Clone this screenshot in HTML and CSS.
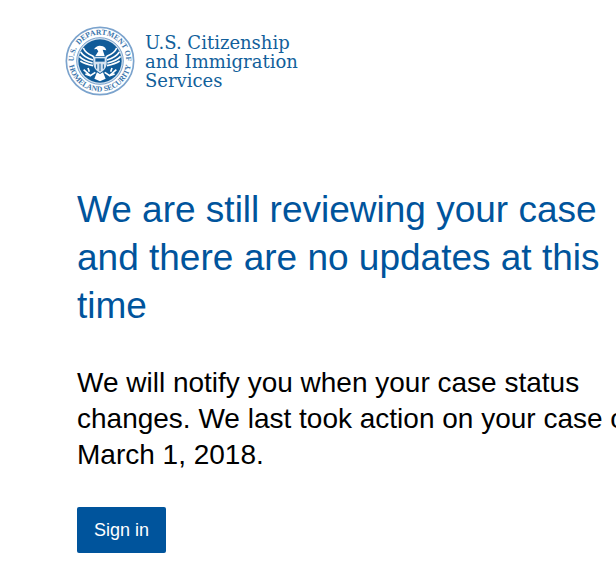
FILE: index.html
```
<!DOCTYPE html>
<html lang="en">
<head>
    <meta charset="UTF-8">
    <meta name="viewport" content="width=device-width, initial-scale=1.0">
    <title>Case Status - U.S. Citizenship and Immigration Services</title>
    <link rel="stylesheet" href="styles.css">
</head>
<body>
    <header class="header">
        <svg class="seal" viewBox="15 18 210 210" role="img" aria-label="U.S. Department of Homeland Security">
            <defs>
                <path id="arc-top" d="M 53 165 A 79 79 0 1 1 187 165"/>
                <path id="arc-bottom" d="M 27 134 A 94 94 0 0 0 213 134"/>
            </defs>
            <circle cx="120" cy="123" r="101" fill="#fff" stroke="#7ba3cd" stroke-width="5"/>
            <circle cx="120" cy="123" r="70" fill="#d5e3f0" stroke="#7ba3cd" stroke-width="3"/>
            <circle cx="120" cy="123" r="65" fill="#115c99"/>
            <text class="seal-text"><textPath href="#arc-top" startOffset="50%" text-anchor="middle">U.S. &nbsp;DEPARTMENT OF</textPath></text>
            <text class="seal-text"><textPath href="#arc-bottom" startOffset="50%" text-anchor="middle">HOMELAND SECURITY</textPath></text>
            <!-- wings -->
            <path fill="none" stroke="#fff" stroke-width="5" d="M70 84 Q76 99 98 108 L106 118 M62 96 Q72 112 99 120 M58 109 Q70 122 98 129 M61 123 Q75 132 99 137"/>
            <path fill="none" stroke="#fff" stroke-width="5" d="M170 84 Q164 99 142 108 L134 118 M178 96 Q168 112 141 120 M182 109 Q170 122 142 129 M179 123 Q165 132 141 137"/>
            <!-- head and neck -->
            <path fill="#fff" d="M102 88 Q111 73 129 79 Q137 82 139 91 L128 89 L134 108 H106 L115 94 L110 87 Z"/>
            <!-- shield -->
            <path fill="#d5e3f0" d="M100 110 H140 V132 Q138 150 120 159 Q102 150 100 132 Z"/>
            <path fill="#115c99" d="M106 115 H134 V125 H106 Z"/>
            <path stroke="#115c99" stroke-width="3" d="M110 133 V146 M120 131 V153 M130 133 V146"/>
            <!-- tail, branch and arrows -->
            <path fill="#fff" d="M111 157 L120 162 L129 157 L137 176 L120 184 L103 176 Z"/>
            <path fill="none" stroke="#fff" stroke-width="5" d="M106 157 L91 167 L71 149 M91 167 L76 162 M88 155 L84 144 M134 157 L149 167 L169 149 M149 167 L164 162 M152 155 L156 144"/>
        </svg>
        <div class="logo-text">U.S. Citizenship<br>and Immigration<br>Services</div>
    </header>
    <main class="content">
        <h1>We are still reviewing your case and there are no updates at this time</h1>
        <p>We will notify you when your case status changes. We last took action on your case on March 1, 2018.</p>
        <button type="button" class="sign-in">Sign in</button>
    </main>
</body>
</html>
```
FILE: styles.css
```
body {
    font-family: "Liberation Sans", Arial, sans-serif;
    margin: 0;
    background-color: #fff;
    color: #000;
    overflow-x: hidden;
}
.header {
    display: flex;
    align-items: center;
    gap: 10px;
    padding: 26px 65px 0;
}
.seal {
    width: 70px;
    height: 70px;
    flex: none;
}
.seal-text {
    font-family: "Liberation Serif", serif;
    font-size: 23px;
    font-weight: bold;
    fill: #3c76ac;
}
.logo-text {
    font-family: "DejaVu Serif", serif;
    font-size: 18px;
    line-height: 19px;
    color: #125f9b;
    white-space: nowrap;
}
.content {
    min-width: 575px; /* keeps the lines long on narrow screens */
    padding: 90px 77px 34px;
}
h1 {
    font-size: 37px;
    font-weight: normal;
    line-height: 48px;
    color: #00549c;
    margin: 0 0 35px;
}
p {
    font-size: 28px;
    line-height: 36px;
    margin: 0 0 34px;
}
.sign-in {
    font-family: inherit;
    font-size: 18px;
    line-height: 20px;
    padding: 13px 17px;
    border: none;
    border-radius: 2px;
    background-color: #00549c;
    color: #fff;
    cursor: pointer;
}
.sign-in:hover {
    background-color: #003f75;
}
```
